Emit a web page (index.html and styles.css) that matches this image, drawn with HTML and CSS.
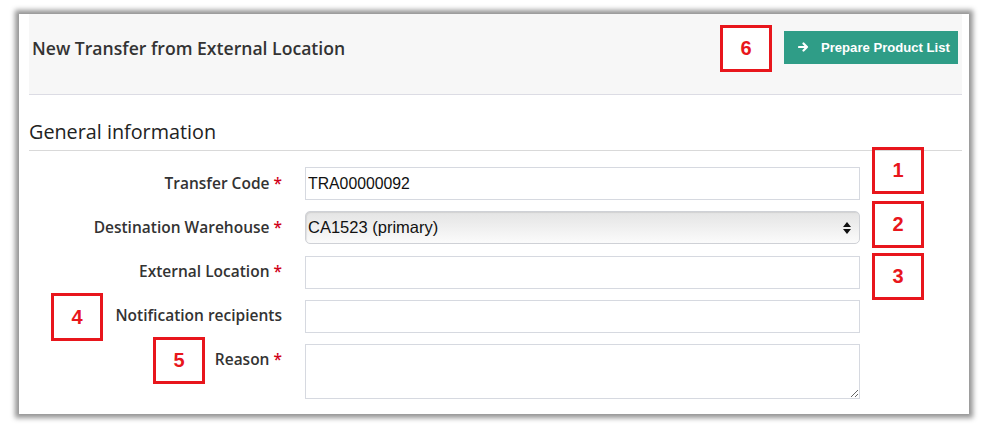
FILE: index.html
```html
<!DOCTYPE html>
<html>
<head>
<meta charset="utf-8">
<link rel="stylesheet" href="styles.css">
</head>
<body>
<div class="frame">
  <div class="content">
    <div class="header">
      <h1 class="title">New Transfer from External Location</h1>
      <button class="btn"><svg class="arrow" width="11" height="10" viewBox="0 0 11 10"><path d="M1 5H9M5.5 1.5L9 5L5.5 8.5" fill="none" stroke="#fff" stroke-width="2.2" stroke-linecap="round" stroke-linejoin="round"/></svg>Prepare Product List</button>
    </div>
    <h2 class="section">General information</h2>
    <div class="form">
      <label class="lbl">Transfer Code <span class="req">*</span></label>
      <input class="field" type="text" value="TRA00000092">
      <label class="lbl">Destination Warehouse <span class="req">*</span></label>
      <div class="select"><span>CA1523 (primary)</span>
        <svg class="updown" width="8" height="12" viewBox="0 0 8 12"><path d="M4 0L8 5H0Z M0 7H8L4 12Z" fill="#111"/></svg>
      </div>
      <label class="lbl">External Location <span class="req">*</span></label>
      <input class="field" type="text">
      <label class="lbl">Notification recipients</label>
      <input class="field shift" type="text">
      <label class="lbl">Reason <span class="req">*</span></label>
      <textarea class="field area"></textarea>
    </div>
  </div>
  <div class="mark m6">6</div>
  <div class="mark m1">1</div>
  <div class="mark m2">2</div>
  <div class="mark m3">3</div>
  <div class="mark m4">4</div>
  <div class="mark m5">5</div>
</div>
</body>
</html>
```

FILE: styles.css
```css
html, body { margin: 0; padding: 0; background: #ffffff; }
body { width: 988px; height: 428px; overflow: hidden; }
.frame {
  position: relative;
  margin: 14px 0 0 19px;
  width: 950px;
  height: 400px;
  background: #fff;
  box-shadow: 0 0 5px 4px rgba(0,0,0,0.42);
}
.content { padding: 0 7px 0 10px; }
.header {
  height: 80px;
  background: #f7f7f7;
  border-bottom: 1px solid #dcdce4;
  display: flex;
  align-items: center;
  justify-content: space-between;
  padding: 0 4px 0 3px;
}
.title {
  margin: 0;
  font-family: "Open Sans", sans-serif;
  font-weight: 600;
  font-size: 17.6px;
  color: #333;
  position: relative;
  top: -6px;
}
.btn {
  width: 174px;
  height: 33px;
  border: none;
  background: #2f9d87;
  color: #fff;
  font-family: "Liberation Sans", Arial, sans-serif;
  font-weight: bold;
  font-size: 13.1px;
  display: flex;
  align-items: center;
  padding: 0 0 0 14px;
  position: relative;
  top: -7px;
}
.arrow { margin-right: 12px; }
.section {
  margin: 0;
  font-family: "Open Sans", sans-serif;
  font-weight: 400;
  font-size: 19.8px;
  color: #222;
  height: 56px;
  line-height: 22px;
  box-sizing: border-box;
  padding-top: 26px;
  border-bottom: 1px solid #d9d9d9;
}
.form {
  display: grid;
  grid-template-columns: 253px 555px;
  column-gap: 23px;
  row-gap: 11px;
  padding-top: 16px;
  grid-auto-rows: 33px;
}
.lbl {
  text-align: right;
  font-family: "Open Sans", sans-serif;
  font-weight: 600;
  font-size: 15.5px;
  color: #333;
  line-height: 33px;
  white-space: nowrap;
}
.req { color: #d0021b; }
.field {
  box-sizing: border-box;
  width: 555px;
  height: 33px;
  margin: 0;
  border: 1px solid #d6d9e0;
  background: #fff;
  font-family: "Liberation Sans", Arial, sans-serif;
  font-size: 15.8px;
  color: #111;
  padding: 0 2px;
  outline: none;
}
.form > .field:nth-of-type(2) { margin-top: 1px; }
.form > .shift { margin-top: 1px; }
.select {
  box-sizing: border-box;
  height: 33px;
  border: 1px solid #cfd1d6;
  border-radius: 5px;
  background: linear-gradient(#e4e4e4, #fbfbfb);
  display: flex;
  align-items: center;
  justify-content: space-between;
  padding: 0 8px 0 2px;
  font-family: "Liberation Sans", Arial, sans-serif;
  font-size: 16.5px;
  color: #111;
  box-shadow: inset 1px 1px 1px rgba(0,0,0,0.08);
}
.area { grid-row: span 2; resize: both; }
.form .area { height: 55px; margin-top: 1px; }
.mark {
  position: absolute;
  box-sizing: border-box;
  width: 52px;
  height: 47px;
  border: 3px solid #e8161c;
  color: #e8161c;
  font-family: "Liberation Sans", Arial, sans-serif;
  font-weight: bold;
  font-size: 20px;
  display: flex;
  align-items: center;
  justify-content: center;
  background: transparent;
}
.m6 { left: 701px; top: 11px; background: #fff; }
.m1 { left: 853px; top: 133px; }
.m2 { left: 853px; top: 187px; }
.m3 { left: 853px; top: 239px; }
.m4 { left: 32px; top: 279px; height: 48px; }
.m5 { left: 134px; top: 323px; }
```
